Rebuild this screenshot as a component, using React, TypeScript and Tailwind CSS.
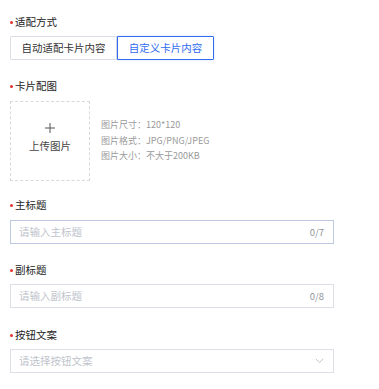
import React from "react";

function Label({ text, className = "" }: { text: string; className?: string }) {
  return (
    <div className={`flex items-center h-4 ${className}`}>
      <span className="w-[3px] h-[3px] rounded-full bg-[#e5322d] ml-[10px] mr-[2px]" />
      <span className="text-[10.5px] leading-4 text-[#222]">{text}</span>
    </div>
  );
}

export default function App() {
  return (
    <div
      className="w-[379px] h-[389px] bg-white relative overflow-hidden"
      style={{ fontFamily: '"Noto Sans CJK SC", "Noto Sans", sans-serif' }}
    >
      <div className="pt-[14px]">
        <Label text="适配方式" />
        <div className="flex ml-[10px] mt-[6px]">
          <div className="w-[107px] h-[24px] border border-[#dcdfe6] flex items-center justify-center text-[10.5px] text-[#333] rounded-l-[1px]">
            自动适配卡片内容
          </div>
          <div className="w-[97px] h-[24px] border border-[#2f6bf0] flex items-center justify-center text-[10.5px] text-[#2f6bf0] shadow-[0_0_2px_rgba(47,107,240,0.25)] rounded-r-[1px]">
            自定义卡片内容
          </div>
        </div>

        <Label text="卡片配图" className="mt-[18px]" />
        <div className="flex mt-[7px] ml-[10px]">
          <div className="w-[80px] h-[80px] border border-dashed border-[#d9d9d9] flex flex-col items-center justify-center pb-[6px]">
            <svg width="10" height="10" viewBox="0 0 10 10" className="mb-[5px]">
              <path d="M5 0 V10 M0 5 H10" stroke="#555" strokeWidth="1" />
            </svg>
            <span className="text-[10.5px] leading-[16px] text-[#444]">上传图片</span>
          </div>
          <div className="ml-[11px] mt-[16px] flex flex-col text-[9px] leading-[15.5px] text-[#9a9a9a]">
            <span>图片尺寸：120*120</span>
            <span>图片格式：JPG/PNG/JPEG</span>
            <span>图片大小：不大于200KB</span>
          </div>
        </div>

        <Label text="主标题" className="mt-[16px]" />
        <div className="mt-[7px] ml-[10px] w-[324px] h-[24px] border border-[#bfcbe3] flex items-center justify-between px-[8px]">
          <span className="text-[10.5px] text-[#c0c4cc]">请输入主标题</span>
          <span className="text-[9.5px] text-[#909399] mr-[1px]">0/7</span>
        </div>

        <Label text="副标题" className="mt-[18px]" />
        <div className="mt-[6px] ml-[10px] w-[324px] h-[24px] border border-[#dcdfe6] flex items-center justify-between px-[8px]">
          <span className="text-[10.5px] text-[#c0c4cc]">请输入副标题</span>
          <span className="text-[9.5px] text-[#909399] mr-[1px]">0/8</span>
        </div>

        <Label text="按钮文案" className="mt-[19px]" />
        <div className="mt-[6px] ml-[10px] w-[324px] h-[24px] border border-[#dcdfe6] flex items-center justify-between pl-[8px] pr-[9px]">
          <span className="text-[10.5px] text-[#c0c4cc]">请选择按钮文案</span>
          <svg width="9" height="6" viewBox="0 0 9 6" fill="none">
            <path d="M0.8 0.8 L4.5 4.6 L8.2 0.8" stroke="#c0c4cc" strokeWidth="1" />
          </svg>
        </div>
      </div>
    </div>
  );
}
